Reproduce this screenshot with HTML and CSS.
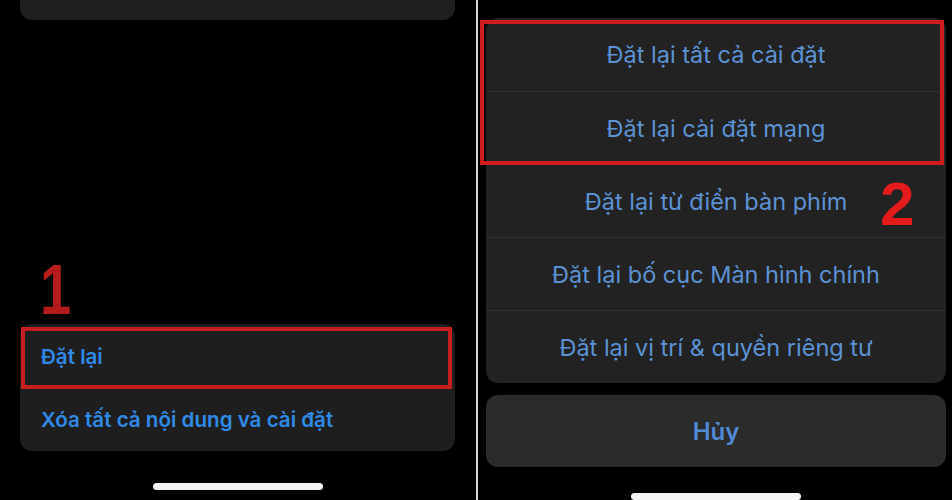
FILE: index.html
```html
<!DOCTYPE html>
<html lang="vi">
<head>
<meta charset="utf-8">
<link rel="stylesheet" href="styles.css">
</head>
<body>
<div class="screen">
  <section class="phone left">
    <div class="top-card"></div>
    <div class="spacer"></div>
    <div class="step step-1">1</div>
    <div class="list-card">
      <div class="list-row first">Đặt lại</div>
      <div class="list-row">Xóa tất cả nội dung và cài đặt</div>
      <div class="highlight hl-left"></div>
    </div>
    <div class="home-bar"></div>
  </section>
  <div class="divider"></div>
  <section class="phone right">
    <div class="sheet">
      <div class="sheet-row">Đặt lại tất cả cài đặt</div>
      <div class="sheet-row">Đặt lại cài đặt mạng</div>
      <div class="sheet-row">Đặt lại từ điển bàn phím</div>
      <div class="sheet-row">Đặt lại bố cục Màn hình chính</div>
      <div class="sheet-row">Đặt lại vị trí &amp; quyền riêng tư</div>
      <div class="highlight hl-right"></div>
      <div class="step step-2">2</div>
    </div>
    <div class="cancel">Hủy</div>
    <div class="home-bar home-right"></div>
  </section>
</div>
</body>
</html>
```
FILE: styles.css
```css
html, body {
  margin: 0;
  padding: 0;
  background: #000;
}
body {
  width: 952px;
  height: 500px;
  overflow: hidden;
  font-family: Inter, "Open Sans", "Liberation Sans", sans-serif;
}
.screen {
  display: flex;
  width: 952px;
  height: 500px;
}
.phone {
  display: flex;
  flex-direction: column;
  height: 500px;
  background: #000;
}
.left {
  width: 476px;
}
.divider {
  width: 2px;
  height: 500px;
  background: #d4d4d4;
}
.right {
  width: 474px;
}
.top-card {
  margin: -20px 21px 0 20px;
  height: 40px;
  background: #1f1f1f;
  border-radius: 12px;
}
.spacer {
  flex: 1;
}
.step {
  font-family: "Liberation Sans", Arial, sans-serif;
  font-weight: 700;
  line-height: 1;
}
.step-1 {
  margin-left: 40px;
  font-size: 70px;
  color: #b71c1c;
  height: 62px;
  margin-bottom: 7px;
  transform: scaleX(0.8);
  transform-origin: left center;
}
.list-card {
  position: relative;
  margin: 0 21px 0 20px;
  background: #1e1e1e;
  border-radius: 12px;
  display: flex;
  flex-direction: column;
}
.list-row {
  height: 63px;
  display: flex;
  align-items: center;
  padding-left: 21px;
  color: #2f8ae8;
  font-size: 20.6px;
  font-weight: 600;
}
.list-row.first {
  height: 64px;
  border-bottom: 1px solid #2c2c2c;
  padding-top: 2px;
  box-sizing: border-box;
}
.highlight {
  position: absolute;
  border: 4px solid #c41e1e;
  box-sizing: border-box;
  pointer-events: none;
}
.hl-left {
  left: 1px;
  top: 3px;
  width: 431px;
  height: 62px;
}
.home-bar {
  width: 170px;
  height: 7px;
  border-radius: 4px;
  background: #f4f4f4;
  margin: 32px auto 10px;
}
.sheet {
  position: relative;
  margin: 18px 6px 0 8px;
  background: #222222;
  border-radius: 12px;
  display: flex;
  flex-direction: column;
}
.sheet-row {
  height: 73px;
  display: flex;
  align-items: center;
  justify-content: center;
  color: #5b93d6;
  font-size: 23.5px;
  border-top: 1px solid #333;
  box-sizing: border-box;
}
.sheet-row:first-child {
  border-top: none;
}
.hl-right {
  left: -6px;
  top: 2px;
  width: 464px;
  height: 145px;
  border-color: #d01c1c;
}
.step-2 {
  position: absolute;
  left: 394px;
  top: 155px;
  font-size: 62px;
  color: #e31b1b;
}
.cancel {
  margin: 12px 6px 0 8px;
  height: 72px;
  border-radius: 12px;
  background: #2b2b2b;
  display: flex;
  align-items: center;
  justify-content: center;
  color: #4e8ad6;
  font-size: 24px;
  font-weight: 600;
}
.home-right {
  margin: 26px auto 0;
  transform: translateX(1px);
}
```
